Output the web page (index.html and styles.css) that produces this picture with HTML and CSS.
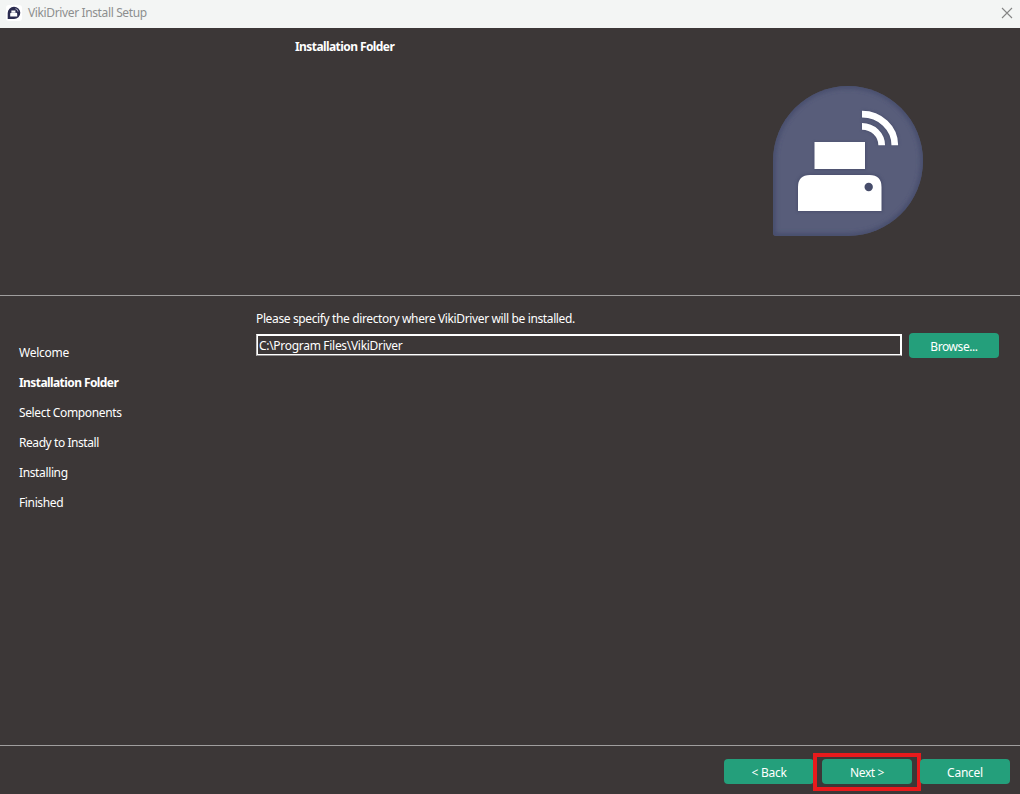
FILE: index.html
```html
<!DOCTYPE html>
<html lang="en">
<head>
<meta charset="utf-8">
<title>VikiDriver Install Setup</title>
<link rel="stylesheet" href="styles.css">
</head>
<body>
<div class="window">
  <header class="titlebar">
    <svg class="app-icon" width="16" height="16" viewBox="0 0 16 16">
      <rect width="16" height="16" rx="3" fill="#fff"/>
      <path d="M1.700 14V8A6.300 6.100 0 1 1 8 14z" fill="#2b2c50"/>
      <path d="M5.400 5.400h4v2.200h-4zM4.200 8.800q0-1 1-1h5q1 0 1 1v2.700h-7z" fill="#fff"/>
      <path d="M9.400 3.800q2.400.1 2.600 2.800" fill="none" stroke="#a9aabd" stroke-width="1"/>
    </svg>
    <span class="title">VikiDriver Install Setup</span>
    <svg class="close" width="12" height="12" viewBox="0 0 12 12"><path d="M1 1l10 10M11 1L1 11" fill="none" stroke="#858585" stroke-width="1.1"/></svg>
  </header>
  <section class="banner">
    <h1 class="page-title">Installation Folder</h1>
    <svg class="logo" width="150" height="150" viewBox="0 0 150 150">
      <defs>
        <clipPath id="drop"><path d="M3 150q-3 0-3-3V75a75 75 0 1 1 75 75z"/></clipPath>
        <filter id="soft" x="-20%" y="-20%" width="140%" height="140%"><feGaussianBlur stdDeviation="2.5"/></filter>
        <filter id="shade" x="-20%" y="-20%" width="140%" height="140%"><feGaussianBlur stdDeviation="1.5"/></filter>
      </defs>
      <g clip-path="url(#drop)">
        <rect width="150" height="150" fill="#585d7a"/>
        <path d="M3 150q-3 0-3-3V75a75 75 0 1 1 75 75z" fill="none" stroke="#414768" stroke-width="4" filter="url(#soft)"/>
      </g>
      <g fill="#3f4564" opacity=".55" filter="url(#shade)">
        <path d="M41 56h52v28H41zM24 126v-26q0-12 12-12h61q13 0 13 12v26z"/>
        <path d="M89 28.200A32.800 31 0 0 1 121.800 59.200M89 40.300A19.700 19 0 0 1 108.700 59.300" fill="none" stroke="#3f4564" stroke-width="8"/>
      </g>
      <path d="M41.500 56h50.500v27H41.500zM25 125v-24q0-12 12-12h59.500q12 0 12 12v24z" fill="#fff"/>
      <path d="M89 28.200A32.800 31 0 0 1 121.800 59.200M89 40.300A19.700 19 0 0 1 108.700 59.300" fill="none" stroke="#fff" stroke-width="6.700"/>
      <circle cx="95.700" cy="101" r="4.200" fill="#474d6b"/>
    </svg>
  </section>
  <main class="content">
    <nav class="steps">
      <span class="step welcome">Welcome</span>
      <span class="step current">Installation Folder</span>
      <span class="step">Select Components</span>
      <span class="step ready">Ready to Install</span>
      <span class="step">Installing</span>
      <span class="step">Finished</span>
    </nav>
    <div class="form">
      <p class="prompt">Please specify the directory where VikiDriver will be installed.</p>
      <div class="path-row">
        <div class="path">C:\Program Files\VikiDriver</div>
        <div class="button browse">Browse...</div>
      </div>
    </div>
  </main>
  <footer class="footer">
    <div class="button">&lt; Back</div>
    <div class="button next">Next &gt;<span class="marker"></span></div>
    <div class="button">Cancel</div>
  </footer>
</div>
</body>
</html>
```
FILE: styles.css
```css
* { box-sizing: border-box; }
body { margin: 0; }
.window {
  width: 1020px;
  height: 794px;
  display: flex;
  flex-direction: column;
  overflow: hidden;
  background: #3c3737;
  color: #fff;
  font: 12px/18px "Noto Sans", "Open Sans", sans-serif;
  letter-spacing: -0.37px;
  white-space: nowrap;
}
.titlebar {
  flex: none;
  height: 28px;
  display: flex;
  align-items: center;
  padding: 0 7px 3px 6px;
  background: #f3f5f4;
  color: #8d8f8f;
}
.title { margin: 1px auto 0 6px; }
.banner {
  flex: none;
  height: 268px;
  display: flex;
  justify-content: space-between;
  padding: 10px 97px 0 295px;
  border-bottom: 1px solid #a09e9e;
}
.page-title {
  margin: 0;
  font-size: 12px;
  line-height: 18px;
  font-weight: 700;
  letter-spacing: -0.58px;
}
.logo { margin-top: 48px; }
.content { flex: 1; display: flex; }
.steps {
  width: 256px;
  display: flex;
  flex-direction: column;
  gap: 12px;
  align-items: flex-start;
  padding: 48px 0 0 19px;
}
.welcome { letter-spacing: -0.25px; }
.current { font-weight: 700; letter-spacing: -0.58px; }
.ready { letter-spacing: -0.43px; }
.form { flex: 1; padding: 14px 21px 0 0; }
.prompt { margin: 0 0 5px; }
.path-row { display: flex; gap: 7px; }
.path {
  width: 646px;
  height: 22px;
  margin-top: 1px;
  padding-left: 2px;
  border: 1px solid #fff;
  border-left-color: #c4c2c2;
  border-bottom-color: #8e8c8c;
  box-shadow: inset 0 0 0 1px #fff;
  line-height: 22px;
  letter-spacing: -0.3px;
}
.button {
  position: relative;
  width: 90px;
  height: 25px;
  border-radius: 4px;
  background: #249f7b;
  text-align: center;
  line-height: 28px;
  letter-spacing: -0.25px;
}
.browse { letter-spacing: -0.42px; }
.next { letter-spacing: -0.4px; }
.footer {
  flex: none;
  height: 49px;
  display: flex;
  justify-content: flex-end;
  gap: 8px;
  padding: 13px 10px 0 0;
  border-top: 1px solid #a09e9e;
}
.marker {
  position: absolute;
  inset: -6px -9px -7px;
  border: 4px solid #e81a1c;
}
```
